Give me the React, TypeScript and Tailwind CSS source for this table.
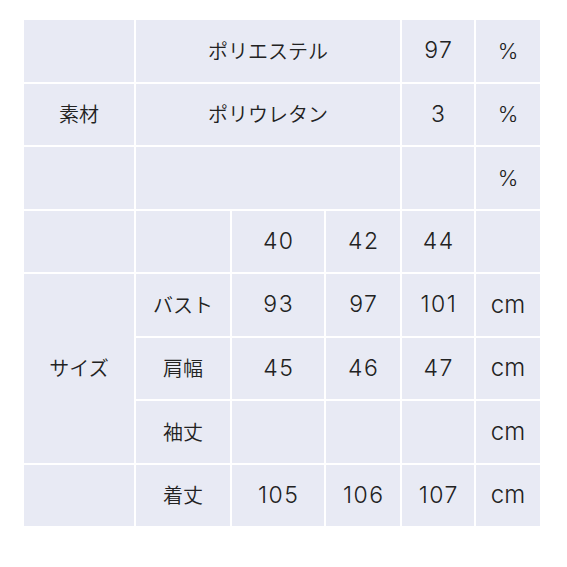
type Cell = { text?: string; colSpan?: number; rowSpan?: number };

const rows: Cell[][] = [
  [{ text: '' }, { text: 'ポリエステル', colSpan: 3 }, { text: '97' }, { text: '%' }],
  [{ text: '素材' }, { text: 'ポリウレタン', colSpan: 3 }, { text: '3' }, { text: '%' }],
  [{ text: '' }, { text: '', colSpan: 3 }, { text: '' }, { text: '%' }],
  [{ text: '' }, { text: '' }, { text: '40' }, { text: '42' }, { text: '44' }, { text: '' }],
  [{ text: 'サイズ', rowSpan: 3 }, { text: 'バスト' }, { text: '93' }, { text: '97' }, { text: '101' }, { text: 'cm' }],
  [{ text: '肩幅' }, { text: '45' }, { text: '46' }, { text: '47' }, { text: 'cm' }],
  [{ text: '袖丈' }, { text: '' }, { text: '' }, { text: '' }, { text: 'cm' }],
  [{ text: '' }, { text: '着丈' }, { text: '105' }, { text: '106' }, { text: '107' }, { text: 'cm' }],
];

function cellText(t: string) {
  if (t === '%') {
    return <span className="font-['Inter',sans-serif] text-[22px] font-[300]">{t}</span>;
  }
  if (t === 'cm') {
    return <span className="font-['Inter',sans-serif] text-[24px] font-[350]">{t}</span>;
  }
  if (/^[0-9]+$/.test(t)) {
    return (
      <span className="font-['Inter',sans-serif] text-[23px] font-[350] tracking-[1.5px] pl-[1.5px]">{t}</span>
    );
  }
  return <span className="font-['Noto_Sans_CJK_JP',sans-serif] text-[20px] font-[350]">{t}</span>;
}

export default function App() {
  return (
    <div className="w-[567px] h-[567px] bg-white pl-[22px] pt-[18px]">
      <table className="table-fixed border-collapse w-[518px] text-[#222]">
        <colgroup>
          <col className="w-[112px]" />
          <col className="w-[96px]" />
          <col className="w-[94px]" />
          <col className="w-[76px]" />
          <col className="w-[74px]" />
          <col className="w-[66px]" />
        </colgroup>
        <tbody>
          {rows.map((row, i) => (
            <tr key={i} className="h-[63.5px]">
              {row.map((c, j) => (
                <td
                  key={j}
                  colSpan={c.colSpan}
                  rowSpan={c.rowSpan}
                  className="border-2 border-white bg-[#e8eaf4] text-center align-middle p-0 leading-none"
                >
                  {c.text ? cellText(c.text) : null}
                </td>
              ))}
            </tr>
          ))}
        </tbody>
      </table>
    </div>
  );
}
